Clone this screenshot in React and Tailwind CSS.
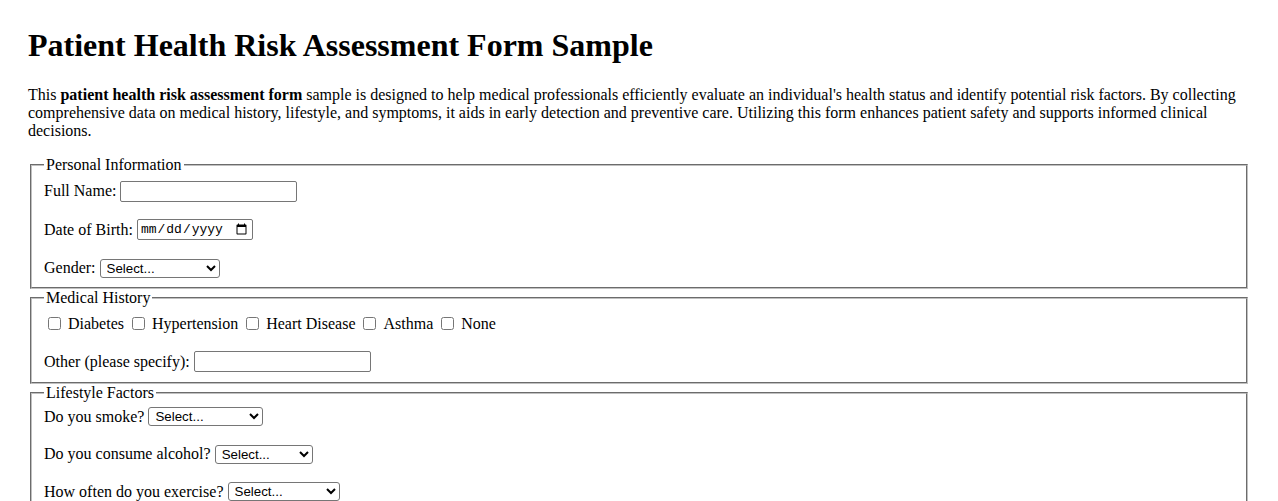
import React from 'react';

const serif = { fontFamily: '"Liberation Serif", "Times New Roman", serif' };

function Row({ children }) {
  return <div className="flex items-center h-[22px] whitespace-nowrap">{children}</div>;
}

function TextBox({ className = 'w-[177px]' }) {
  return (
    <input
      type="text"
      className={`${className} h-[21px] ml-[4px] px-[2px] py-[1px] border border-[#767676] rounded-[2px] bg-white text-[13.33px] font-['Liberation_Sans',Arial,sans-serif]`}
    />
  );
}

function Select({ width }) {
  return (
    <select
      style={{ width }}
      className="h-[19px] ml-[4px] pl-[2px] border border-[#767676] rounded-[3px] bg-white text-black text-[13.33px] font-['Liberation_Sans',Arial,sans-serif]"
      defaultValue=""
    >
      <option value="">Select...</option>
      <option>Yes</option>
      <option>No</option>
    </select>
  );
}

function Check({ label }) {
  return (
    <label className="inline-flex items-center">
      <input type="checkbox" className="w-[13px] h-[13px] mt-[3px] mb-[3px] ml-[4px] mr-[3px]" />
      <span className="ml-[4px] mr-[4px]">{label}</span>
    </label>
  );
}

function Section({ title, className, children }) {
  return (
    <fieldset className={`mx-[2px] border-2 [border-style:groove] border-[#c0c0c0] px-[12px] ${className}`}>
      <legend className="px-[2px] leading-[18px]">{title}</legend>
      {children}
    </fieldset>
  );
}

export default function App() {
  return (
    <div className="bg-white text-black min-h-screen px-[28px] pt-[27px] text-[16px]" style={serif}>
      <h1 className="text-[32px] font-bold leading-[37px] mb-[21.5px]">Patient Health Risk Assessment Form Sample</h1>
      <p className="leading-[18px] mb-[16px]">
        This <strong>patient health risk assessment form</strong> sample is designed to help medical professionals
        efficiently evaluate an individual's health status and identify potential risk factors. By collecting
        comprehensive data on medical history, lifestyle, and symptoms, it aids in early detection and preventive care.
        Utilizing this form enhances patient safety and supports informed clinical decisions.
      </p>

      <form>
        <Section title="Personal Information" className="pt-[6.6px] pb-[8px]">
          <div className="flex flex-col gap-[16.5px]">
            <Row>
              Full Name: <TextBox />
            </Row>
            <Row>
              Date of Birth:
              <input
                type="date"
                className="w-[116px] h-[21px] ml-[4px] px-[2px] border border-[#767676] rounded-[2px] bg-white text-[13px] font-['Liberation_Mono',monospace]"
              />
            </Row>
            <Row>
              Gender: <Select width="120px" />
            </Row>
          </div>
        </Section>

        <Section title="Medical History" className="pt-[5.6px] pb-[9px]">
          <div className="flex flex-col gap-[16px]">
            <Row>
              <Check label="Diabetes" />
              <Check label="Hypertension" />
              <Check label="Heart Disease" />
              <Check label="Asthma" />
              <Check label="None" />
            </Row>
            <Row>
              Other (please specify): <TextBox />
            </Row>
          </div>
        </Section>

        <Section title="Lifestyle Factors" className="pt-[4px] pb-[10px]">
          <div className="flex flex-col gap-[15.5px]">
            <Row>
              Do you smoke? <Select width="115px" />
            </Row>
            <Row>
              Do you consume alcohol? <Select width="98px" />
            </Row>
            <Row>
              How often do you exercise? <Select width="112px" />
            </Row>
          </div>
        </Section>
      </form>
    </div>
  );
}
